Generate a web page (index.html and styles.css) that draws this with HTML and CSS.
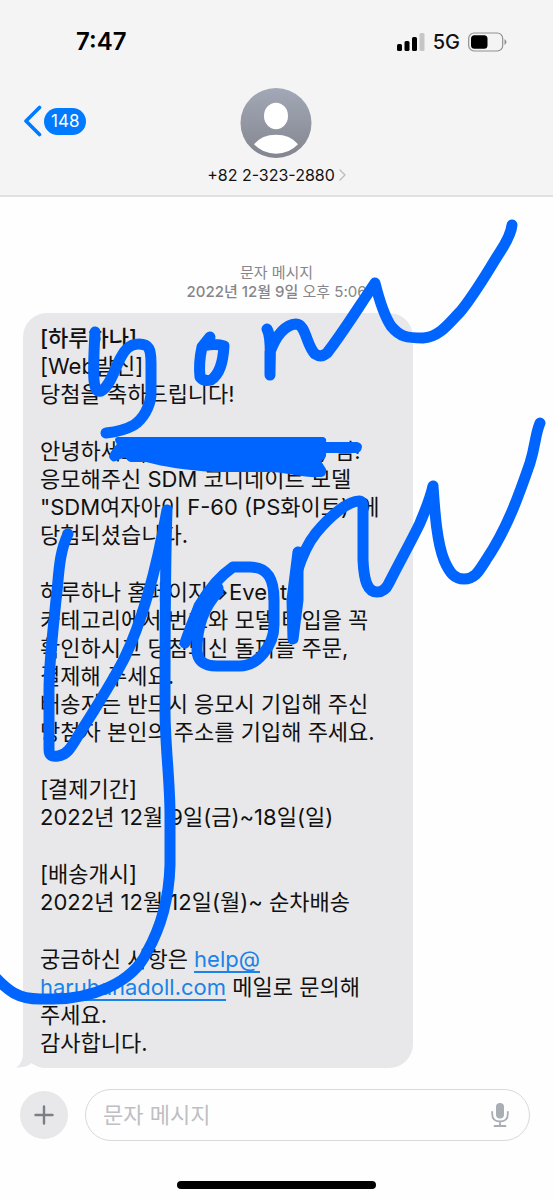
FILE: index.html
```html
<!DOCTYPE html>
<html lang="ko">
<head>
  <meta charset="UTF-8" />
  <meta name="viewport" content="width=device-width, initial-scale=1.0" />
  <title>문자 메시지</title>
  <link rel="stylesheet" href="styles.css">
</head>
<body>
  <header class="header">
    <div class="status-bar">
      <span class="time">7:47</span>
      <div class="status-icons">
        <svg width="28" height="19" viewBox="0 0 28 19" aria-hidden="true">
          <rect x="0" y="11" width="5" height="7" rx="1.5" />
          <rect x="7.500" y="8" width="5" height="10" rx="1.5" />
          <rect x="15" y="4" width="5" height="14" rx="1.5" />
          <rect x="22.500" y="0" width="5" height="18" rx="1.5" fill="#c6c6c6" />
        </svg>
        <span class="network">5G</span>
        <svg width="39" height="20" viewBox="0 0 39 20" aria-hidden="true">
          <rect x="0.700" y="1" width="34" height="18" rx="5.500" fill="none" stroke="#8f8f8f" stroke-width="1.200" />
          <rect x="3" y="3.300" width="16.500" height="13.400" rx="3.500" />
          <path d="M36.500 7 Q38.500 8.500 38.500 10 Q38.500 11.500 36.500 13 Z" fill="#8f8f8f" />
        </svg>
      </div>
    </div>
    <div class="nav">
      <button type="button" class="back" aria-label="뒤로">
        <svg width="18" height="32" viewBox="0 0 18 32" aria-hidden="true">
          <path d="M15.500 2.500 L2 16 L15.500 29.500" fill="none" stroke="#007aff" stroke-width="3.600" stroke-linecap="round" stroke-linejoin="round" />
        </svg>
        <span class="badge">148</span>
      </button>
      <button type="button" class="contact">
        <svg width="72" height="74" viewBox="0 0 72 74" preserveAspectRatio="none" aria-hidden="true">
          <defs>
            <linearGradient id="avatar" x1="0" y1="0" x2="0" y2="1">
              <stop offset="0" stop-color="#a3a8b7" />
              <stop offset="1" stop-color="#83868f" />
            </linearGradient>
          </defs>
          <ellipse cx="36" cy="37" rx="35.500" ry="37" fill="url(#avatar)" />
          <ellipse cx="36" cy="29.500" rx="12" ry="14" fill="#fff" />
          <path d="M14 59.500 Q22 49.500 36 49.500 Q50 49.500 58 59.500 Q49 69.500 36 69.500 Q23 69.500 14 59.500 Z" fill="#fff" />
        </svg>
        <span class="number">+82 2-323-2880
          <svg width="7" height="12" viewBox="0 0 7 12" aria-hidden="true">
            <path d="M1 1 L6 6 L1 11" fill="none" stroke="#bdbdc0" stroke-width="1.400" stroke-linecap="round" stroke-linejoin="round" />
          </svg>
        </span>
      </button>
    </div>
  </header>

  <main class="thread">
    <p class="stamp">문자 메시지<br><span class="date">2022년 12월 9일</span> 오후 5:06</p>
    <div class="bubble">
      <p><strong>[하루하나]</strong><br>[Web발신]<br>당첨을 축하드립니다!</p>
      <p>안녕하세요, <span class="name"></span>) 님!<br>응모해주신 SDM 코디네이트 모델<br>"SDM여자아이 F-60 (PS화이트)"에<br>당험되셨습니다.</p>
      <p>하루하나 홈페이지→Event<br>카테고리에서 번호와 모델 타입을 꼭<br>확인하시고 당첨되신 돌피를 주문,<br>결제해 주세요.<br>배송지는 반드시 응모시 기입해 주신<br>당첨자 본인의 주소를 기입해 주세요.</p>
      <p>[결제기간]<br>2022년 12월 9일(금)~18일(일)</p>
      <p>[배송개시]<br>2022년 12월 12일(월)~ 순차배송</p>
      <p>궁금하신 사항은 <a href="mailto:help@haruhanadoll.com">help@<br>haruhanadoll.com</a> 메일로 문의해<br>주세요.<br>감사합니다.</p>
      <svg class="tail" width="36" height="24" viewBox="0 0 36 24" aria-hidden="true">
        <path d="M7 0 V9 Q7 19 0 23.500 Q10 24 15.500 19 Q22 24 30 24 L36 0 Z" />
      </svg>
    </div>
  </main>

  <form class="composer">
    <button type="button" class="add" aria-label="추가">
      <svg width="20" height="20" viewBox="0 0 20 20" aria-hidden="true">
        <path d="M10 1.500 V18.500 M1.500 10 H18.500" stroke="#7b7e85" stroke-width="2.400" stroke-linecap="round" />
      </svg>
    </button>
    <div class="field">
      <input type="text" placeholder="문자 메시지" aria-label="문자 메시지">
      <button type="button" class="mic" aria-label="받아쓰기">
        <svg width="18" height="26" viewBox="0 0 18 26" aria-hidden="true">
          <rect x="5" y="1" width="8" height="15.500" rx="4" fill="#a9adb4" />
          <path d="M1.200 10 V12 Q1.200 19.500 9 19.500 Q16.800 19.500 16.800 12 V10 M9 19.500 V24 M3.500 24 H14.500" fill="none" stroke="#a9adb4" stroke-width="1.800" stroke-linecap="round" />
        </svg>
      </button>
    </div>
  </form>
  <div class="home-bar"></div>

  <!-- pen marks -->
  <svg class="ink" viewBox="0 0 553 1200" aria-hidden="true">
    <path d="M95 332 C94 350 93 368 94 380 C95 391 98 392 101 391 C109 387 114 372 118 363 C124 350 129 344 139 344 C149 344 151 349 151 363 V395 C150 407 143 419 134 425 C127 429 115 432 106 433" />
    <path d="M210 337 L202 347 C200 356 199 368 200 377 Q204 382 211 380 C220 374 223 362 224 346 Q216 343 203 346" />
    <path d="M267 329 C272 338 270 355 270 375 V352 C276 336 284 325 296 324 C306 324 306 345 315 354 Q321 358 327 353 C342 334 358 308 375 283 C380 303 385 317 391 326 C400 337 407 338 423 338 C440 337 450 322 460 312 C475 294 489 269 500 252 Q511 235 512 225" />
    <path class="fill" d="M117 437 H323 Q327 438 326 442 H357 Q362 443 362 447 Q361 453 356 453 H326 Q327 458 321 461 L326 469 Q327 476 321 477 C305 478 288 473 273 472 H213 C185 470 165 467 146 462 H131 Q127 461 126 458 Q121 458 118 460 Q112 464 109 457 Q109 453 117 444 Q113 439 117 437 Z" />
    <path d="M68 534 C58 555 59 578 56 600 C52 640 49 665 49 690 V749 C49 756 52 757 58 756 C69 755 73 743 83 728 C97 706 112 682 124 659 C142 622 157 566 167 510 C165 570 165 660 165 710 C165 745 170 780 170 815 V865 C169 900 160 929 147 952 C132 984 90 999 53 999 H40 C18 999 8 991 -6 976" />
    <path d="M185 643 C193 620 203 588 233 567 H250 C270 567 274 582 274 600 V625 C274 646 257 666 240 666 H217 C203 666 197 660 197 650 C197 627 203 608 218 592" />
    <path class="blob" d="M194 620 L199 606 L209 591 L218 588 L204 602 L197 618 Z" />
    <path class="blob" d="M298 552 L298 600 L293 639 L292 600 Z" />
    <path d="M297 572 C302 556 308 543 316 533 C330 516 348 501 359 501 Q363 501 363 507 V560 C364 582 368 592 377 592 Q385 592 389 583 C400 561 412 540 420 523 C426 508 430 500 433 486 C435 515 437 542 444 560 C450 574 455 579 464 579 C475 579 479 571 486 560 C507 529 519 495 530 463 C536 443 535 435 540 423" />
  </svg>
</body>
</html>
```
FILE: styles.css
```css
* { box-sizing: border-box; }
body {
  position: relative;
  display: flex;
  flex-direction: column;
  min-height: 100vh;
  margin: 0;
  overflow-x: hidden;
  background: #fefefe;
  color: #111;
  font-family: Inter, "Noto Sans CJK KR", sans-serif;
}
button {
  border: none;
  padding: 0;
  background: none;
  color: inherit;
  font: inherit;
  cursor: pointer;
}
svg {
  display: block;
}
.header {
  height: 197px;
  background: #f4f4f4;
  border-bottom: 2px solid #e0e0e0;
}
.status-bar {
  display: flex;
  justify-content: space-between;
  align-items: center;
  padding: 27px 46px 0 76px;
}
.time {
  font-size: 24px;
  line-height: 30px;
  font-weight: 600;
  color: #000;
}
.status-icons {
  display: flex;
  align-items: center;
  gap: 8px;
}
.network {
  font-size: 20px;
  line-height: 30px;
  font-weight: 500;
}
.nav {
  display: grid;
  grid-template-columns: 1fr auto 1fr;
  align-items: start;
  padding: 31px 24px 0;
}
.back {
  display: flex;
  align-items: center;
  gap: 2px;
  margin-top: 17px;
}
.badge {
  padding: 0 7px;
  border-radius: 14px;
  background: #007aff;
  color: #fff;
  font-size: 17px;
  line-height: 27px;
}
.contact {
  display: flex;
  flex-direction: column;
  align-items: center;
  gap: 5px;
}
.contact svg {
  height: 70px;
}
.number {
  display: flex;
  align-items: center;
  gap: 4px;
  font-size: 16px;
  line-height: 24px;
}
.number svg {
  height: 12px;
}
.thread {
  flex: 1;
  padding: 66px 23px 20px;
}
.stamp {
  margin: 0 0 12px;
  color: #85858a;
  font-size: 15px;
  line-height: 19px;
  text-align: center;
}
.date {
  font-weight: 500;
}
.bubble {
  position: relative;
  isolation: isolate;
  width: 77%;
  padding: 11px 17px;
  border-radius: 24px;
  background: #e8e8ea;
  font-size: 22px;
  line-height: 28px;
  white-space: nowrap;
}
.bubble p {
  margin: 0 0 29px;
}
.bubble p:last-of-type {
  margin-bottom: 0;
}
.bubble strong {
  font-weight: 500;
}
.bubble a {
  color: #1a82e8;
  text-underline-offset: 4px;
}
.name {
  display: inline-block;
  width: 166px;
}
.tail {
  position: absolute;
  z-index: -1;
  left: -7px;
  bottom: 0;
  fill: #e8e8ea;
}
.composer {
  display: flex;
  align-items: center;
  gap: 17px;
  padding: 0 23px 0 20px;
}
.add {
  display: flex;
  justify-content: center;
  align-items: center;
  width: 48px;
  height: 48px;
  border-radius: 50%;
  background: #e8e8ea;
}
.field {
  flex: 1;
  display: flex;
  align-items: center;
  padding: 0 20px 0 17px;
  border: 1px solid #d9d9dc;
  border-radius: 26px;
}
.field input {
  flex: 1;
  min-width: 0;
  height: 50px;
  padding: 0;
  border: none;
  outline: none;
  background: none;
  font: inherit;
  font-size: 22px;
}
.field input::placeholder {
  color: #bfbfc3;
}
.home-bar {
  width: 36%;
  height: 8px;
  margin: 40px auto 11px;
  border-radius: 4px;
  background: #000;
}
.ink {
  position: absolute;
  top: 0;
  left: 0;
  width: 100%;
  fill: none;
  stroke: #0064ff;
  stroke-width: 11;
  stroke-linecap: round;
  stroke-linejoin: round;
  pointer-events: none;
}
.ink .fill {
  fill: #0064ff;
  stroke: none;
}
.ink .blob {
  fill: #0064ff;
}
```
